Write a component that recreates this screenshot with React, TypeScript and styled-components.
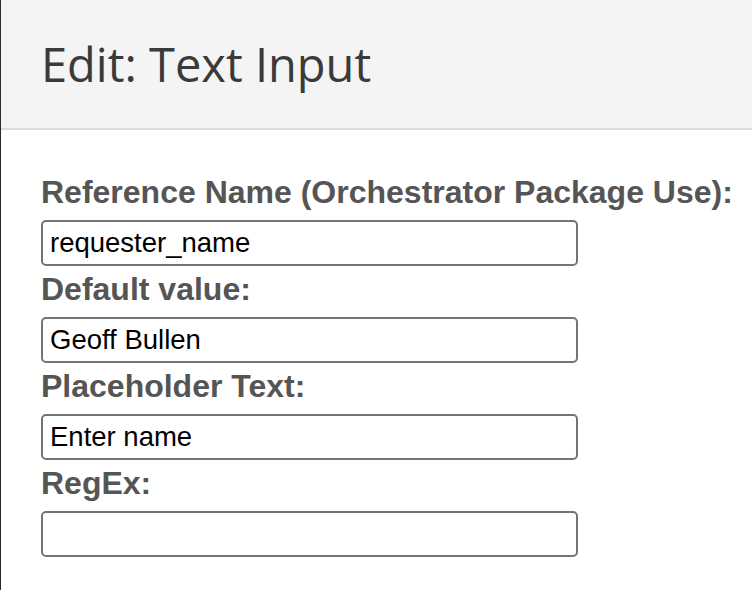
import React from "react";
import styled, { createGlobalStyle } from "styled-components";

const Global = createGlobalStyle`
  html, body { margin: 0; padding: 0; background: #ffffff; }
  #root { min-height: 590px; }
`;

const Page = styled.div`
  box-sizing: border-box;
  min-height: 590px;
  width: 752px;
  border-left: 1px solid #2b2b2b;
  background: #ffffff;
`;

const Header = styled.header`
  box-sizing: border-box;
  height: 130px;
  background: #f4f4f4;
  border-bottom: 2px solid #dcdcdc;
  display: flex;
  align-items: center;
  padding-left: 40px;
`;

const Title = styled.h1`
  margin: 0;
  font-family: "Open Sans", "Liberation Sans", sans-serif;
  font-weight: 400;
  font-size: 47px;
  color: #3a3a3a;
`;

const Form = styled.div`
  padding: 39px 0 0 40px;
  display: flex;
  flex-direction: column;
`;

const Field = styled.div`
  display: flex;
  flex-direction: column;
  align-items: flex-start;
`;

const Label = styled.label`
  display: block;
  font-family: "Liberation Sans", Arial, sans-serif;
  font-weight: 700;
  font-size: 32px;
  line-height: 47px;
  margin-bottom: 4px;
  color: #555555;
  white-space: nowrap;
`;

const Input = styled.input`
  box-sizing: border-box;
  width: 537px;
  height: 46px;
  border: 2px solid #747474;
  border-radius: 5px;
  padding: 0 7px;
  font-family: "Liberation Sans", Arial, sans-serif;
  font-size: 27.5px;
  color: #000000;
  background: #ffffff;
  outline: none;
`;

const fields = [
  { label: "Reference Name (Orchestrator Package Use):", value: "requester_name" },
  { label: "Default value:", value: "Geoff Bullen" },
  { label: "Placeholder Text:", value: "Enter name" },
  { label: "RegEx:", value: "" },
];

export default function App() {
  return (
    <>
      <Global />
      <Page>
        <Header>
          <Title>Edit: Text Input</Title>
        </Header>
        <Form>
          {fields.map((f) => (
            <Field key={f.label}>
              <Label>{f.label}</Label>
              <Input defaultValue={f.value} readOnly />
            </Field>
          ))}
        </Form>
      </Page>
    </>
  );
}
